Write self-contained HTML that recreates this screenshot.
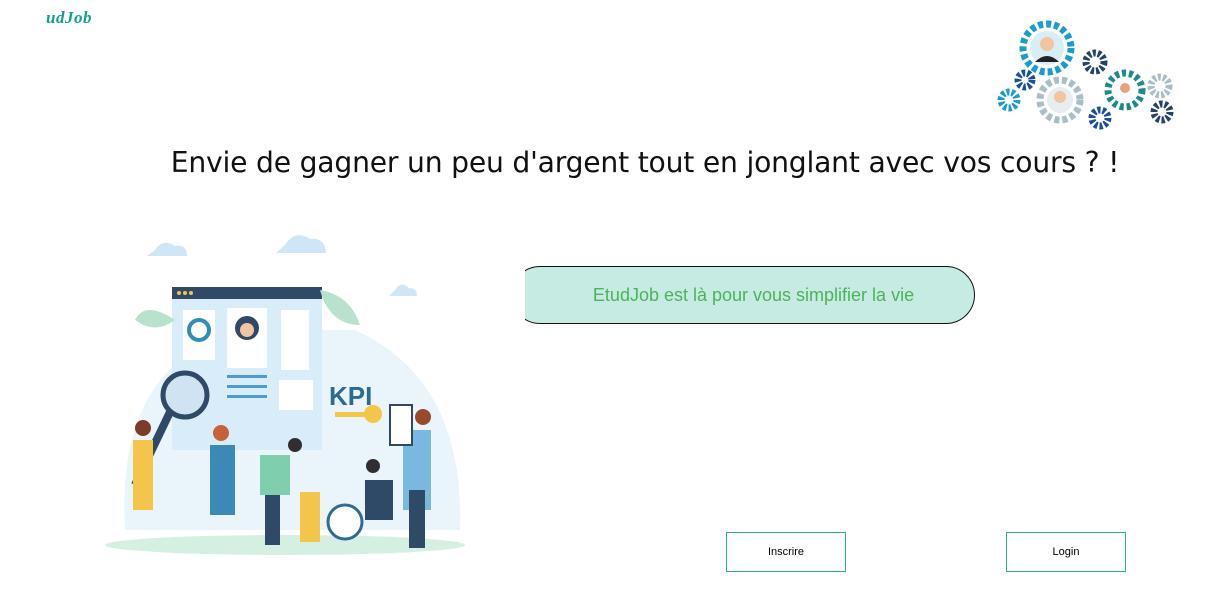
<!DOCTYPE html>
<html><head><meta charset="utf-8"><style>
body{margin:0;width:1208px;height:607px;background:#fff;position:relative;overflow:hidden;font-family:"Liberation Sans",sans-serif}
.logo{position:absolute;left:46px;top:8px;font:italic bold 17px "Liberation Serif",serif;color:#13a08a;letter-spacing:0.5px}
h1{position:absolute;left:0;width:1290px;top:146px;margin:0;text-align:center;font-weight:normal;font-size:28.2px;color:#111;font-family:"DejaVu Sans","Liberation Sans",sans-serif;letter-spacing:-0.2px}
.pillwrap{position:absolute;left:525px;top:266px;width:451px;height:58px;overflow:hidden}
.pill{position:absolute;left:-14px;top:0;width:441px;height:56px;border:1px solid #111;border-radius:29px;background:#c5ebe2;color:#4cb35a;font-size:18px;line-height:56px;text-align:center;padding-left:21px}
.btn{position:absolute;top:532px;width:118px;height:38px;border:1px solid #2db37f;font-size:11px;line-height:38px;text-align:center;color:#000}
</style></head><body>
<div class="logo">udJob</div>
<h1>Envie de gagner un peu d'argent tout en jonglant avec vos cours ? !</h1>
<div class="pillwrap"><div class="pill">EtudJob est là pour vous simplifier la vie</div></div>
<div class="btn" style="left:726px">Inscrire</div>
<div class="btn" style="left:1006px">Login</div>

<svg style="position:absolute;left:995px;top:20px" width="190" height="110">
<g fill="none" stroke-width="7">
<circle cx="52" cy="28" r="24" stroke="#1a9ccf" stroke-dasharray="5 3"/>
<circle cx="65" cy="80" r="20" stroke="#a9bfc7" stroke-dasharray="5 3"/>
<circle cx="130" cy="70" r="17" stroke="#1a8a8e" stroke-dasharray="4 3"/>
<circle cx="100" cy="42" r="9" stroke="#23436b" stroke-dasharray="3 2"/>
<circle cx="30" cy="60" r="7" stroke="#1a4fa0" stroke-dasharray="3 2"/>
<circle cx="14" cy="80" r="8" stroke="#1a9ccf" stroke-dasharray="3 2"/>
<circle cx="105" cy="98" r="8" stroke="#1a4fa0" stroke-dasharray="3 2"/>
<circle cx="165" cy="66" r="9" stroke="#a9bfc7" stroke-dasharray="3 2"/>
<circle cx="167" cy="92" r="8" stroke="#23436b" stroke-dasharray="3 2"/>
</g>
<circle cx="52" cy="28" r="17" fill="#d8eef7"/><circle cx="52" cy="24" r="7" fill="#f3c4a0"/><path d="M40 42q12-12 24 0z" fill="#222"/>
<circle cx="65" cy="80" r="13" fill="#e7eef0"/><circle cx="65" cy="77" r="6" fill="#f3c4a0"/>
<circle cx="130" cy="70" r="11" fill="#fff"/><circle cx="130" cy="68" r="5" fill="#e9a27a"/>
</svg>

<svg style="position:absolute;left:105px;top:230px" width="365" height="330">
<ellipse cx="180" cy="315" rx="180" ry="10" fill="#d6efe3"/>
<path d="M20 300 Q10 130 140 100 L250 100 Q360 150 355 300Z" fill="#eaf4fb"/>
<path d="M50 20q8-12 20-4q12-2 12 10h-40z" fill="#cfe6f7"/>
<path d="M180 15q10-16 25-6q15-2 16 14h-50z" fill="#cfe6f7"/>
<path d="M290 60q6-10 14-2q8 0 8 8h-28z" fill="#cfe6f7"/>
<rect x="67" y="57" width="150" height="163" fill="#d9ecfa"/>
<rect x="67" y="57" width="150" height="12" fill="#2f4a66"/>
<circle cx="74" cy="63" r="2" fill="#f3c64b"/><circle cx="80" cy="63" r="2" fill="#f3c64b"/><circle cx="86" cy="63" r="2" fill="#f3c64b"/>
<rect x="78" y="80" width="32" height="50" fill="#fff"/><circle cx="94" cy="100" r="10" fill="none" stroke="#2f8fb5" stroke-width="4"/>
<rect x="122" y="78" width="40" height="60" fill="#fff"/><circle cx="142" cy="98" r="12" fill="#2f4a66"/><circle cx="142" cy="100" r="7" fill="#f3c4a0"/>
<rect x="176" y="80" width="28" height="60" fill="#fff"/>
<rect x="174" y="150" width="34" height="30" fill="#fff"/>
<rect x="122" y="145" width="40" height="3" fill="#4c9ad6"/><rect x="122" y="155" width="40" height="3" fill="#4c9ad6"/><rect x="122" y="165" width="40" height="3" fill="#4c9ad6"/>
<path d="M215 60q30 5 40 35q-30 0-40-35z" fill="#b8e2cd"/>
<path d="M70 90q-30-20-40 0q20 15 40 0z" fill="#b8e2cd"/>
<text x="224" y="175" font-size="26" font-weight="bold" fill="#2c6a95" font-family="Liberation Sans">KPI</text>
<rect x="230" y="182" width="40" height="5" fill="#f3c64b"/><circle cx="268" cy="184" r="9" fill="#f3c64b"/>
<circle cx="80" cy="165" r="22" fill="#cfe3f2" stroke="#2f4a66" stroke-width="5"/>
<path d="M65 182 L30 255" stroke="#2f4a66" stroke-width="8"/>
<rect x="28" y="210" width="20" height="70" fill="#f3c64b"/><circle cx="38" cy="198" r="8" fill="#7a3d2a"/>
<rect x="105" y="215" width="25" height="70" fill="#3d88b5"/><circle cx="116" cy="203" r="8" fill="#c4623a"/>
<rect x="155" y="225" width="30" height="40" fill="#7fcfae"/><rect x="160" y="265" width="15" height="50" fill="#2f4a66"/><circle cx="190" cy="215" r="7" fill="#2f2f2f"/>
<circle cx="240" cy="292" r="17" fill="#fff" stroke="#2f6a95" stroke-width="3"/>
<rect x="195" y="262" width="20" height="50" fill="#f3c64b"/>
<rect x="260" y="250" width="28" height="40" fill="#2f4a66"/><circle cx="268" cy="236" r="7" fill="#2f2f2f"/>
<rect x="298" y="200" width="28" height="80" fill="#7ab8e0"/><rect x="304" y="260" width="16" height="58" fill="#2f4a66"/><circle cx="318" cy="187" r="8" fill="#9a4a2a"/>
<rect x="285" y="175" width="22" height="40" fill="#fff" stroke="#2f4a66" stroke-width="2"/>
</svg>
</body></html>
